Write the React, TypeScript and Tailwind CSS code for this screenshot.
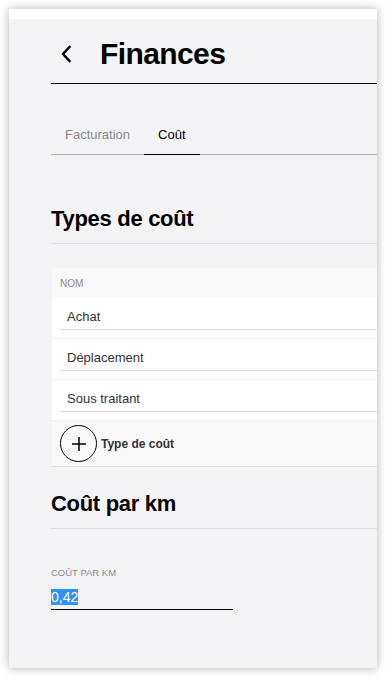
import React from 'react';

const costTypes = ['Achat', 'Déplacement', 'Sous traitant'];

const ChevronLeft = () => (
  <svg width="12" height="20" viewBox="0 0 12 20" fill="none">
    <path d="M9.5 3 L3 10 L9.5 17" stroke="#000" strokeWidth="2.4" strokeLinecap="square" />
  </svg>
);

const PlusIcon = () => (
  <svg width="16" height="16" viewBox="0 0 16 16" fill="none">
    <path d="M8 1 V15 M1 8 H15" stroke="#000" strokeWidth="1.5" />
  </svg>
);

export default function App() {
  return (
    <div className="min-h-screen bg-white pl-[9px] pt-[9px] font-['Liberation_Sans',Arial,sans-serif]">
      <div className="w-[368px] h-[659px] overflow-hidden flex flex-col shadow-[0_0_9px_rgba(0,0,0,0.3)]">
        <div className="h-[10px] bg-white" />
        <div className="flex-1 bg-[#f4f4f6] pl-[42px]">
          {/* Header */}
          <div className="h-[65px] pt-[5px] flex items-center border-b border-black">
            <div className="ml-[9px] w-[40px] flex items-center">
              <ChevronLeft />
            </div>
            <h1 className="text-[30px] font-bold tracking-[-0.6px] text-black">Finances</h1>
          </div>

          {/* Tabs */}
          <div className="mt-[31px] flex border-b border-[#b4b4b8]">
            <div className="h-[40px] px-[14px] flex items-center text-[13px] text-[#888] -mb-px border-b border-transparent">
              Facturation
            </div>
            <div className="h-[40px] px-[14px] flex items-center text-[13px] text-black -mb-px border-b-[1.5px] border-black">
              Coût
            </div>
          </div>

          {/* Types de coût */}
          <h2 className="mt-[50px] pb-[10px] leading-[28px] text-[22px] font-bold tracking-[-0.3px] text-black border-b border-[#dedee2]">
            Types de coût
          </h2>

          <div className="mt-[24px] ml-px">
            <div className="h-[30px] bg-[#f9f9fa] flex items-center pl-[8px] text-[10px] text-[#8a8a8e] uppercase">
              Nom
            </div>
            {costTypes.map((name) => (
              <div key={name} className="bg-white pl-[8px] pt-[7px] pb-[8px] border-b border-[#efeff1]">
                <div className="h-[25px] flex items-center pl-[7px] text-[13px] text-[#333] border-b border-[#dcdcdf]">
                  {name}
                </div>
              </div>
            ))}
            <div className="bg-[#f9f9fa] py-[4px] pl-[8px] flex items-center border-b border-[#e0e0e4]">
              <div className="w-[37px] h-[37px] rounded-full border border-black flex items-center justify-center">
                <PlusIcon />
              </div>
              <span className="ml-[4px] text-[12px] font-bold text-[#333]">Type de coût</span>
            </div>
          </div>

          {/* Coût par km */}
          <h2 className="mt-[23px] pb-[10px] leading-[28px] text-[22px] font-bold tracking-[-0.3px] text-black border-b border-[#dedee2]">
            Coût par km
          </h2>

          <div className="mt-[38px] leading-[12px] text-[9.5px] text-[#8a8a8e] uppercase">Coût par km</div>
          <div className="mt-[6px] w-[182px] h-[25px] leading-[25px] border-b border-black text-[14px]">
            <span className="bg-[#3390ff] text-white">0,42</span>
          </div>
        </div>
      </div>
    </div>
  );
}
